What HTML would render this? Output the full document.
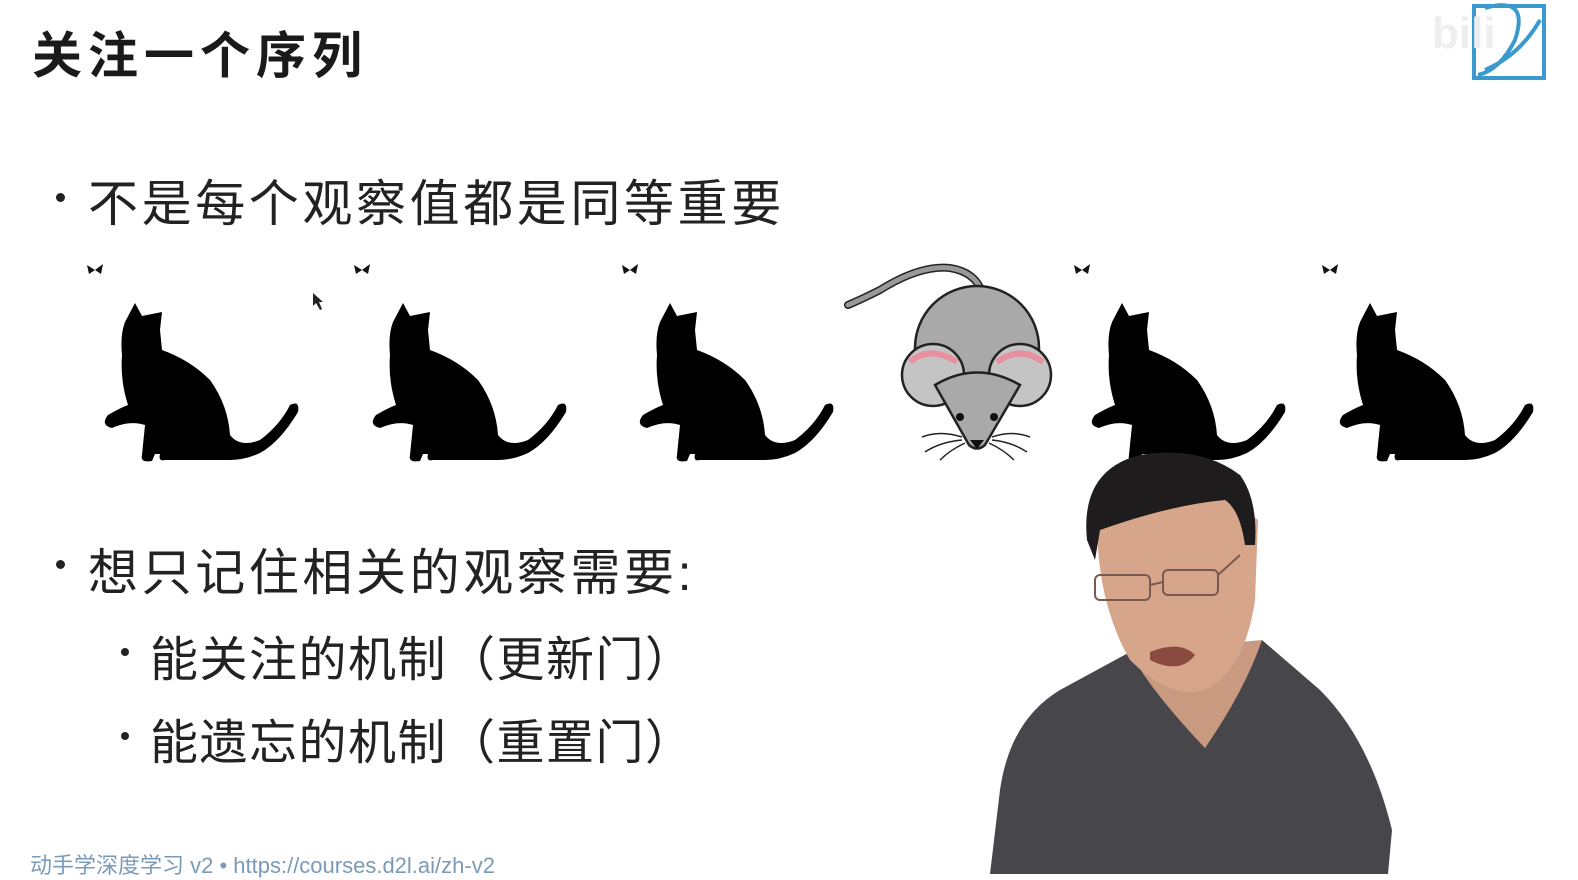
<!DOCTYPE html>
<html><head><meta charset="utf-8"><style>
html,body{margin:0;padding:0;background:#fff;}
body{width:1578px;height:874px;position:relative;overflow:hidden;font-family:"Liberation Sans","Noto Sans CJK SC",sans-serif;}
.t{position:absolute;white-space:nowrap;color:#222;}
.d{position:absolute;width:9px;height:9px;border-radius:50%;background:#222;}
</style></head><body>
<div class="t" style="left:32px;top:16px;font-size:50px;font-weight:bold;color:#1a1a1a;letter-spacing:6px;">关注一个序列</div>
<div class="d" style="left:56px;top:193px;"></div>
<div class="t" style="left:88px;top:164px;font-size:50px;letter-spacing:3.6px;">不是每个观察值都是同等重要</div>
<div class="d" style="left:56px;top:560px;"></div>
<div class="t" style="left:88px;top:533px;font-size:50px;letter-spacing:3.6px;">想只记住相关的观察需要:</div>
<div class="d" style="left:121px;top:648px;width:8px;height:8px;"></div>
<div class="t" style="left:150px;top:620px;font-size:48px;letter-spacing:1.5px;">能关注的机制（更新门）</div>
<div class="d" style="left:121px;top:732px;width:8px;height:8px;"></div>
<div class="t" style="left:150px;top:703px;font-size:48px;letter-spacing:1.5px;">能遗忘的机制（重置门）</div>
<div class="t" style="left:30px;top:848px;font-size:22px;color:#7a9ab8;">动手学深度学习 v2 • https://courses.d2l.ai/zh-v2</div>
<svg width="1578" height="874" style="position:absolute;left:0;top:0">
<defs>
<g id="cat"><path d="M55,53 L62,66 L82,62 L80,80 L82,100 Q110,110 130,130 Q148,155 150,185 Q160,198 180,190 Q200,175 210,155 Q220,150 218,162 Q200,192 180,203 Q165,210 150,210 L85,210 Q78,212 80,204 L75,204 L72,211 Q60,213 62,205 L65,175 Q50,170 32,178 Q20,175 28,165 Q40,158 48,155 Q40,130 42,105 Q40,85 45,72 Z" fill="#000"/></g>
<g id="bf"><path d="M0,0 L-8,-5 L-6,4 Z M0,0 L8,-6 L6,4 Z" fill="#111"/></g>
</defs>
<use href="#cat" x="80" y="250"/><use href="#cat" x="348" y="250"/><use href="#cat" x="615" y="250"/><use href="#cat" x="1067" y="250"/><use href="#cat" x="1315" y="250"/>
<use href="#bf" x="95" y="270"/><use href="#bf" x="362" y="270"/><use href="#bf" x="630" y="270"/><use href="#bf" x="1082" y="270"/><use href="#bf" x="1330" y="270"/>
<path d="M313,293 L313,306 L316,303 L320,310 L322,309 L319,302 L323,302 Z" fill="#222"/>
<path d="M848,305 Q860,300 880,290 Q920,265 950,268 Q975,272 982,292" fill="none" stroke="#222" stroke-width="8" stroke-linecap="round"/>
<path d="M848,305 Q860,300 880,290 Q920,265 950,268 Q975,272 982,292" fill="none" stroke="#999" stroke-width="5" stroke-linecap="round"/>
<circle cx="977" cy="348" r="62" fill="#a9a9a9" stroke="#222" stroke-width="2.5"/>
<circle cx="933" cy="375" r="31" fill="#c4c4c4" stroke="#222" stroke-width="2.5"/>
<path d="M910,362 Q930,345 957,362" stroke="#e8909e" stroke-width="6" fill="none"/>
<circle cx="1020" cy="375" r="31" fill="#c4c4c4" stroke="#222" stroke-width="2.5"/>
<path d="M997,362 Q1020,345 1043,362" stroke="#e8909e" stroke-width="6" fill="none"/>
<path d="M935,385 Q977,360 1020,385 L985,445 Q977,452 969,445 Z" fill="#a9a9a9" stroke="#222" stroke-width="2.5"/>
<circle cx="960" cy="417" r="4" fill="#111"/><circle cx="994" cy="417" r="4" fill="#111"/>
<path d="M970,440 L984,440 L977,449 Z" fill="#111"/>
<g stroke="#222" stroke-width="1.5" fill="none"><path d="M962,437 Q940,430 922,437 M962,440 Q940,442 925,452 M965,443 Q950,450 940,460 M992,437 Q1012,430 1030,437 M992,440 Q1012,442 1027,452 M989,443 Q1004,450 1014,460"/></g>
<path d="M990,874 L1000,790 Q1010,720 1060,690 L1130,652 L1205,748 L1262,640 L1320,690 Q1370,740 1392,830 L1388,874 Z" fill="#47464b"/>
<path d="M1130,652 Q1150,690 1205,748 Q1245,690 1262,640 Z" fill="#c99a80"/>
<path d="M1097,510 Q1095,600 1130,660 Q1170,700 1205,690 Q1245,670 1255,600 L1258,520 Q1200,470 1140,480 Z" fill="#d6a58a"/>
<path d="M1087,540 Q1080,470 1140,455 Q1200,445 1240,475 Q1258,500 1255,545 L1245,545 Q1240,510 1225,500 Q1170,505 1100,530 L1095,560 Z" fill="#1e1c1c"/>
<path d="M1150,652 Q1180,640 1195,655 Q1180,675 1150,660 Z" fill="#8a4a40"/>
<g stroke="#7a5a50" stroke-width="2" fill="none"><rect x="1095" y="575" width="55" height="25" rx="5"/><rect x="1163" y="570" width="55" height="25" rx="5"/><path d="M1150,585 L1163,582 M1218,575 L1240,555"/></g>
<rect x="1474" y="6" width="70" height="72" fill="none" stroke="#3a9ad0" stroke-width="4"/>
<path d="M1485,8 Q1530,-5 1515,40 Q1500,70 1478,75 M1485,70 Q1520,55 1540,20" fill="none" stroke="#3a9ad0" stroke-width="4"/>
<text x="1432" y="48" font-family="Liberation Sans" font-size="44" font-weight="bold" fill="#eeeeee">bili</text>
</svg>
</body></html>
